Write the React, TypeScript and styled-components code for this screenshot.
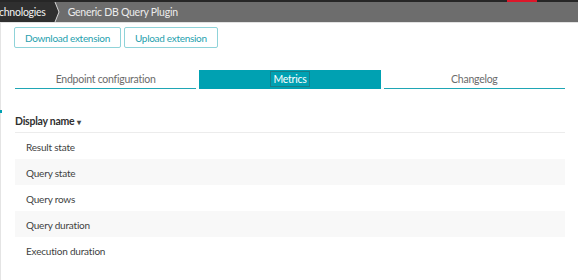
import React, { useState } from "react";
import styled, { createGlobalStyle } from "styled-components";

const GlobalStyle = createGlobalStyle`
  html, body {
    margin: 0;
    padding: 0;
    background: #ffffff;
  }
  body {
    font-family: Lato, "Open Sans", sans-serif;
    -webkit-font-smoothing: antialiased;
  }
`;

const tabs = ["Endpoint configuration", "Metrics", "Changelog"];
const metrics = ["Result state", "Query state", "Query rows", "Query duration", "Execution duration"];

const App: React.FC = () => {
  const [active, setActive] = useState<number>(1);

  return (
    <Page>
      <GlobalStyle />
      <TopStrip>
        <Spacer />
        <RedMark />
        <StripTail />
      </TopStrip>
      <Breadcrumbs>
        <CrumbDark>Technologies</CrumbDark>
        <Chevron width="8" height="20" viewBox="0 0 8 20">
          <polygon points="0,0 3,0 7,10 3,20 0,20" fill="#2f2f2f" />
          <polyline points="3,0 7,10 3,20" fill="none" stroke="#d6d6d6" strokeWidth="1" />
        </Chevron>
        <CrumbCurrent>Generic DB Query Plugin</CrumbCurrent>
      </Breadcrumbs>
      <Body>
        <SideMark />
        <Content>
          <ButtonRow>
            <OutlineButton>Download extension</OutlineButton>
            <OutlineButton>Upload extension</OutlineButton>
          </ButtonRow>
          <TabBar>
            {tabs.map((t, i) => (
              <Tab key={t} $active={i === active} onClick={() => setActive(i)}>
                <TabLabel $active={i === active}>{t}</TabLabel>
              </Tab>
            ))}
          </TabBar>
          <Table>
            <HeaderRow>
              <HeaderCell>
                Display name <SortArrow>▾</SortArrow>
              </HeaderCell>
            </HeaderRow>
            {metrics.map((m, i) => (
              <Row key={m} $striped={i % 2 === 1}>
                {m}
              </Row>
            ))}
          </Table>
        </Content>
      </Body>
    </Page>
  );
};

const Page = styled.div`
  width: 578px;
  height: 280px;
  overflow: hidden;
`;

const TopStrip = styled.div`
  display: flex;
  height: 2px;
  background: #262626;
`;

const Spacer = styled.div`
  width: 507px;
`;

const RedMark = styled.div`
  width: 30px;
  background: #dc172a;
`;

const StripTail = styled.div`
  flex: 1;
`;

const Breadcrumbs = styled.div`
  display: flex;
  align-items: stretch;
  height: 20px;
  background: #6d6d6d;
  border-bottom: 1px solid #e2e2e2;
  overflow: hidden;
`;

const CrumbDark = styled.div`
  display: flex;
  align-items: center;
  margin-left: -11px;
  padding-right: 6px;
  background: #2f2f2f;
  color: #f2f2f2;
  font-size: 10.5px;
  letter-spacing: -0.25px;
`;

const Chevron = styled.svg`
  display: block;
  flex-shrink: 0;
`;

const CrumbCurrent = styled.div`
  display: flex;
  align-items: center;
  padding-left: 8px;
  color: #ececec;
  font-size: 10.5px;
  letter-spacing: -0.25px;
`;

const Body = styled.div`
  position: relative;
  border-left: 1px solid #e4e4e4;
  height: 257px;
`;

const SideMark = styled.div`
  position: absolute;
  left: -1px;
  top: 87px;
  width: 2px;
  height: 3px;
  background: #00a1b2;
`;

const Content = styled.div`
  display: flex;
  flex-direction: column;
  padding: 4px 13px 0 13px;
`;

const ButtonRow = styled.div`
  display: flex;
  gap: 3px;
`;

const OutlineButton = styled.button`
  height: 21px;
  padding: 0 10px;
  border: 1px solid #8fd3d9;
  border-radius: 2px;
  background: #ffffff;
  color: #1f9fae;
  font-family: Lato, "Open Sans", sans-serif;
  font-size: 10px;
  letter-spacing: -0.3px;
  cursor: pointer;
`;

const TabBar = styled.div`
  display: grid;
  grid-template-columns: repeat(3, 1fr);
  gap: 3px;
  margin: 22px 0 0 1px;
`;

const Tab = styled.div<{ $active: boolean }>`
  display: flex;
  align-items: center;
  justify-content: center;
  height: 18.5px;
  padding-top: 1px;
  box-sizing: border-box;
  background: ${(p) => (p.$active ? "#00a1b2" : "transparent")};
  border-bottom: 1.5px solid ${(p) => (p.$active ? "#00a1b2" : "#1fa6b5")};
  cursor: pointer;
`;

const TabLabel = styled.span<{ $active: boolean }>`
  padding: 1px 2px;
  border: 1px solid ${(p) => (p.$active ? "#1b7d86" : "transparent")};
  color: ${(p) => (p.$active ? "#ffffff" : "#6b6b6b")};
  font-size: 10.5px;
  letter-spacing: -0.25px;
`;

const Table = styled.div`
  display: flex;
  flex-direction: column;
  margin: 22px 0 0 1px;
`;

const HeaderRow = styled.div`
  display: flex;
  align-items: center;
  height: 21px;
  border-bottom: 1px solid #ececec;
`;

const HeaderCell = styled.div`
  color: #2f2f2f;
  font-size: 10.5px;
  font-weight: 700;
  letter-spacing: -0.25px;
`;

const SortArrow = styled.span`
  font-size: 8px;
  color: #454545;
`;

const Row = styled.div<{ $striped: boolean }>`
  display: flex;
  align-items: center;
  height: 26px;
  padding-left: 11px;
  padding-top: 2px;
  box-sizing: border-box;
  background: ${(p) => (p.$striped ? "#f8f8f8" : "#ffffff")};
  color: #3e3f3f;
  font-size: 10px;
  letter-spacing: -0.2px;
`;

export default App;
